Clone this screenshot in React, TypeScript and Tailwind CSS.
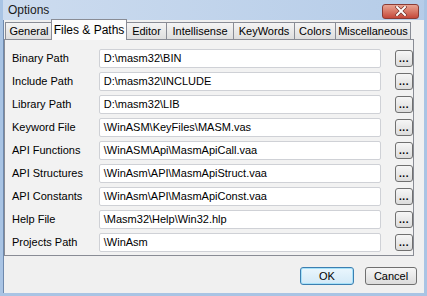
import React from "react";

const rows: [string, string][] = [
  ["Binary Path", "D:\\masm32\\BIN"],
  ["Include Path", "D:\\masm32\\INCLUDE"],
  ["Library Path", "D:\\masm32\\LIB"],
  ["Keyword File", "\\WinASM\\KeyFiles\\MASM.vas"],
  ["API Functions", "\\WinASM\\Api\\MasmApiCall.vaa"],
  ["API Structures", "\\WinAsm\\API\\MasmApiStruct.vaa"],
  ["API Constants", "\\WinAsm\\API\\MasmApiConst.vaa"],
  ["Help File", "\\Masm32\\Help\\Win32.hlp"],
  ["Projects Path", "\\WinAsm"],
];

const tabs: [string, string][] = [
  ["General", "w-[47px]"],
  ["Files & Paths", "w-[76px]"],
  ["Editor", "w-[40px]"],
  ["Intellisense", "w-[67px]"],
  ["KeyWords", "w-[61px]"],
  ["Colors", "w-[41px]"],
  ["Miscellaneous", "w-[76px]"],
];

const App = () => {
  return (
    <div className="w-[427px] h-[296px] bg-[#f0f0f0] font-['Liberation_Sans',Arial,sans-serif] text-[11px] text-black flex flex-col border-l-[3px] border-r-[3px] border-b-[3px] border-[#a9c4e4] relative overflow-hidden">
      <div className="absolute left-0 top-[20px] bottom-0 w-px bg-[#6e89ad]" />
      {/* title bar */}
      <div className="h-[20px] shrink-0 flex items-center justify-between bg-gradient-to-r from-[#cddcef] to-[#b5cce8] -mx-[3px] px-[8px]">
        <span className="text-[12px] text-[#1a1a1a]">Options</span>
        <div className="w-[37px] h-[15px] mt-[2px] rounded-[3px] border border-[#8b3c35] bg-gradient-to-b from-[#e8a493] to-[#c4473a] flex items-center justify-center">
          <svg width="12" height="10" viewBox="0 0 12 10">
            <path d="M2 1 L10 9 M10 1 L2 9" stroke="#6b2a24" strokeWidth="3.2" strokeLinecap="square" />
            <path d="M2 1 L10 9 M10 1 L2 9" stroke="#ffffff" strokeWidth="2" strokeLinecap="square" />
          </svg>
        </div>
      </div>
      {/* tabs */}
      <div className="flex items-end h-[20px] pl-[2px] relative z-10">
        {tabs.map(([t, w]) =>
          t === "Files & Paths" ? (
            <div key={t} className={`${w} h-[21px] -mx-[1px] bg-[#fcfcfc] border border-b-0 border-[#898c95] flex items-center justify-center text-[12px]`}>
              {t}
            </div>
          ) : (
            <div key={t} className={`${w} h-[18px] bg-gradient-to-b from-[#f4f4f4] to-[#dedede] border border-[#898c95] border-r-0 last:border-r flex items-center justify-center`}>
              {t}
            </div>
          )
        )}
      </div>
      {/* panel */}
      <div className="ml-[1px] w-[410px] h-[217px] -mt-px border border-[#898c95] bg-[#f2f2f2] flex flex-col pt-[7px] pl-[7px]">
        {rows.map(([label, value]) => (
          <div key={label} className="flex items-center h-[23px] shrink-0">
            <span className="w-[87px]">{label}</span>
            <div className="w-[283px] h-[19px] bg-white border border-[#cfd1d6] rounded-[2px] flex items-center pl-[4px]">
              {value}
            </div>
            <div className="ml-[14px] w-[18px] h-[17px] rounded-[3px] border border-[#707070] bg-gradient-to-b from-[#f6f6f6] to-[#dcdcdc] flex items-end justify-center pb-[2px] leading-none text-[10px] font-bold tracking-[0.5px]">
              ...
            </div>
          </div>
        ))}
      </div>
      {/* buttons */}
      <div className="flex justify-end gap-[11px] mt-[11px] pr-[7px]">
        <div className="w-[54px] h-[18px] rounded-[3px] border border-[#3c7fb1] shadow-[inset_0_0_0_1px_#a6e1f9] bg-gradient-to-b from-[#eaf6fd] to-[#d3e9f7] flex items-center justify-center">
          OK
        </div>
        <div className="w-[52px] h-[18px] rounded-[3px] border border-[#707070] bg-gradient-to-b from-[#f6f6f6] to-[#dcdcdc] flex items-center justify-center">
          Cancel
        </div>
      </div>
    </div>
  );
};

export default App;
